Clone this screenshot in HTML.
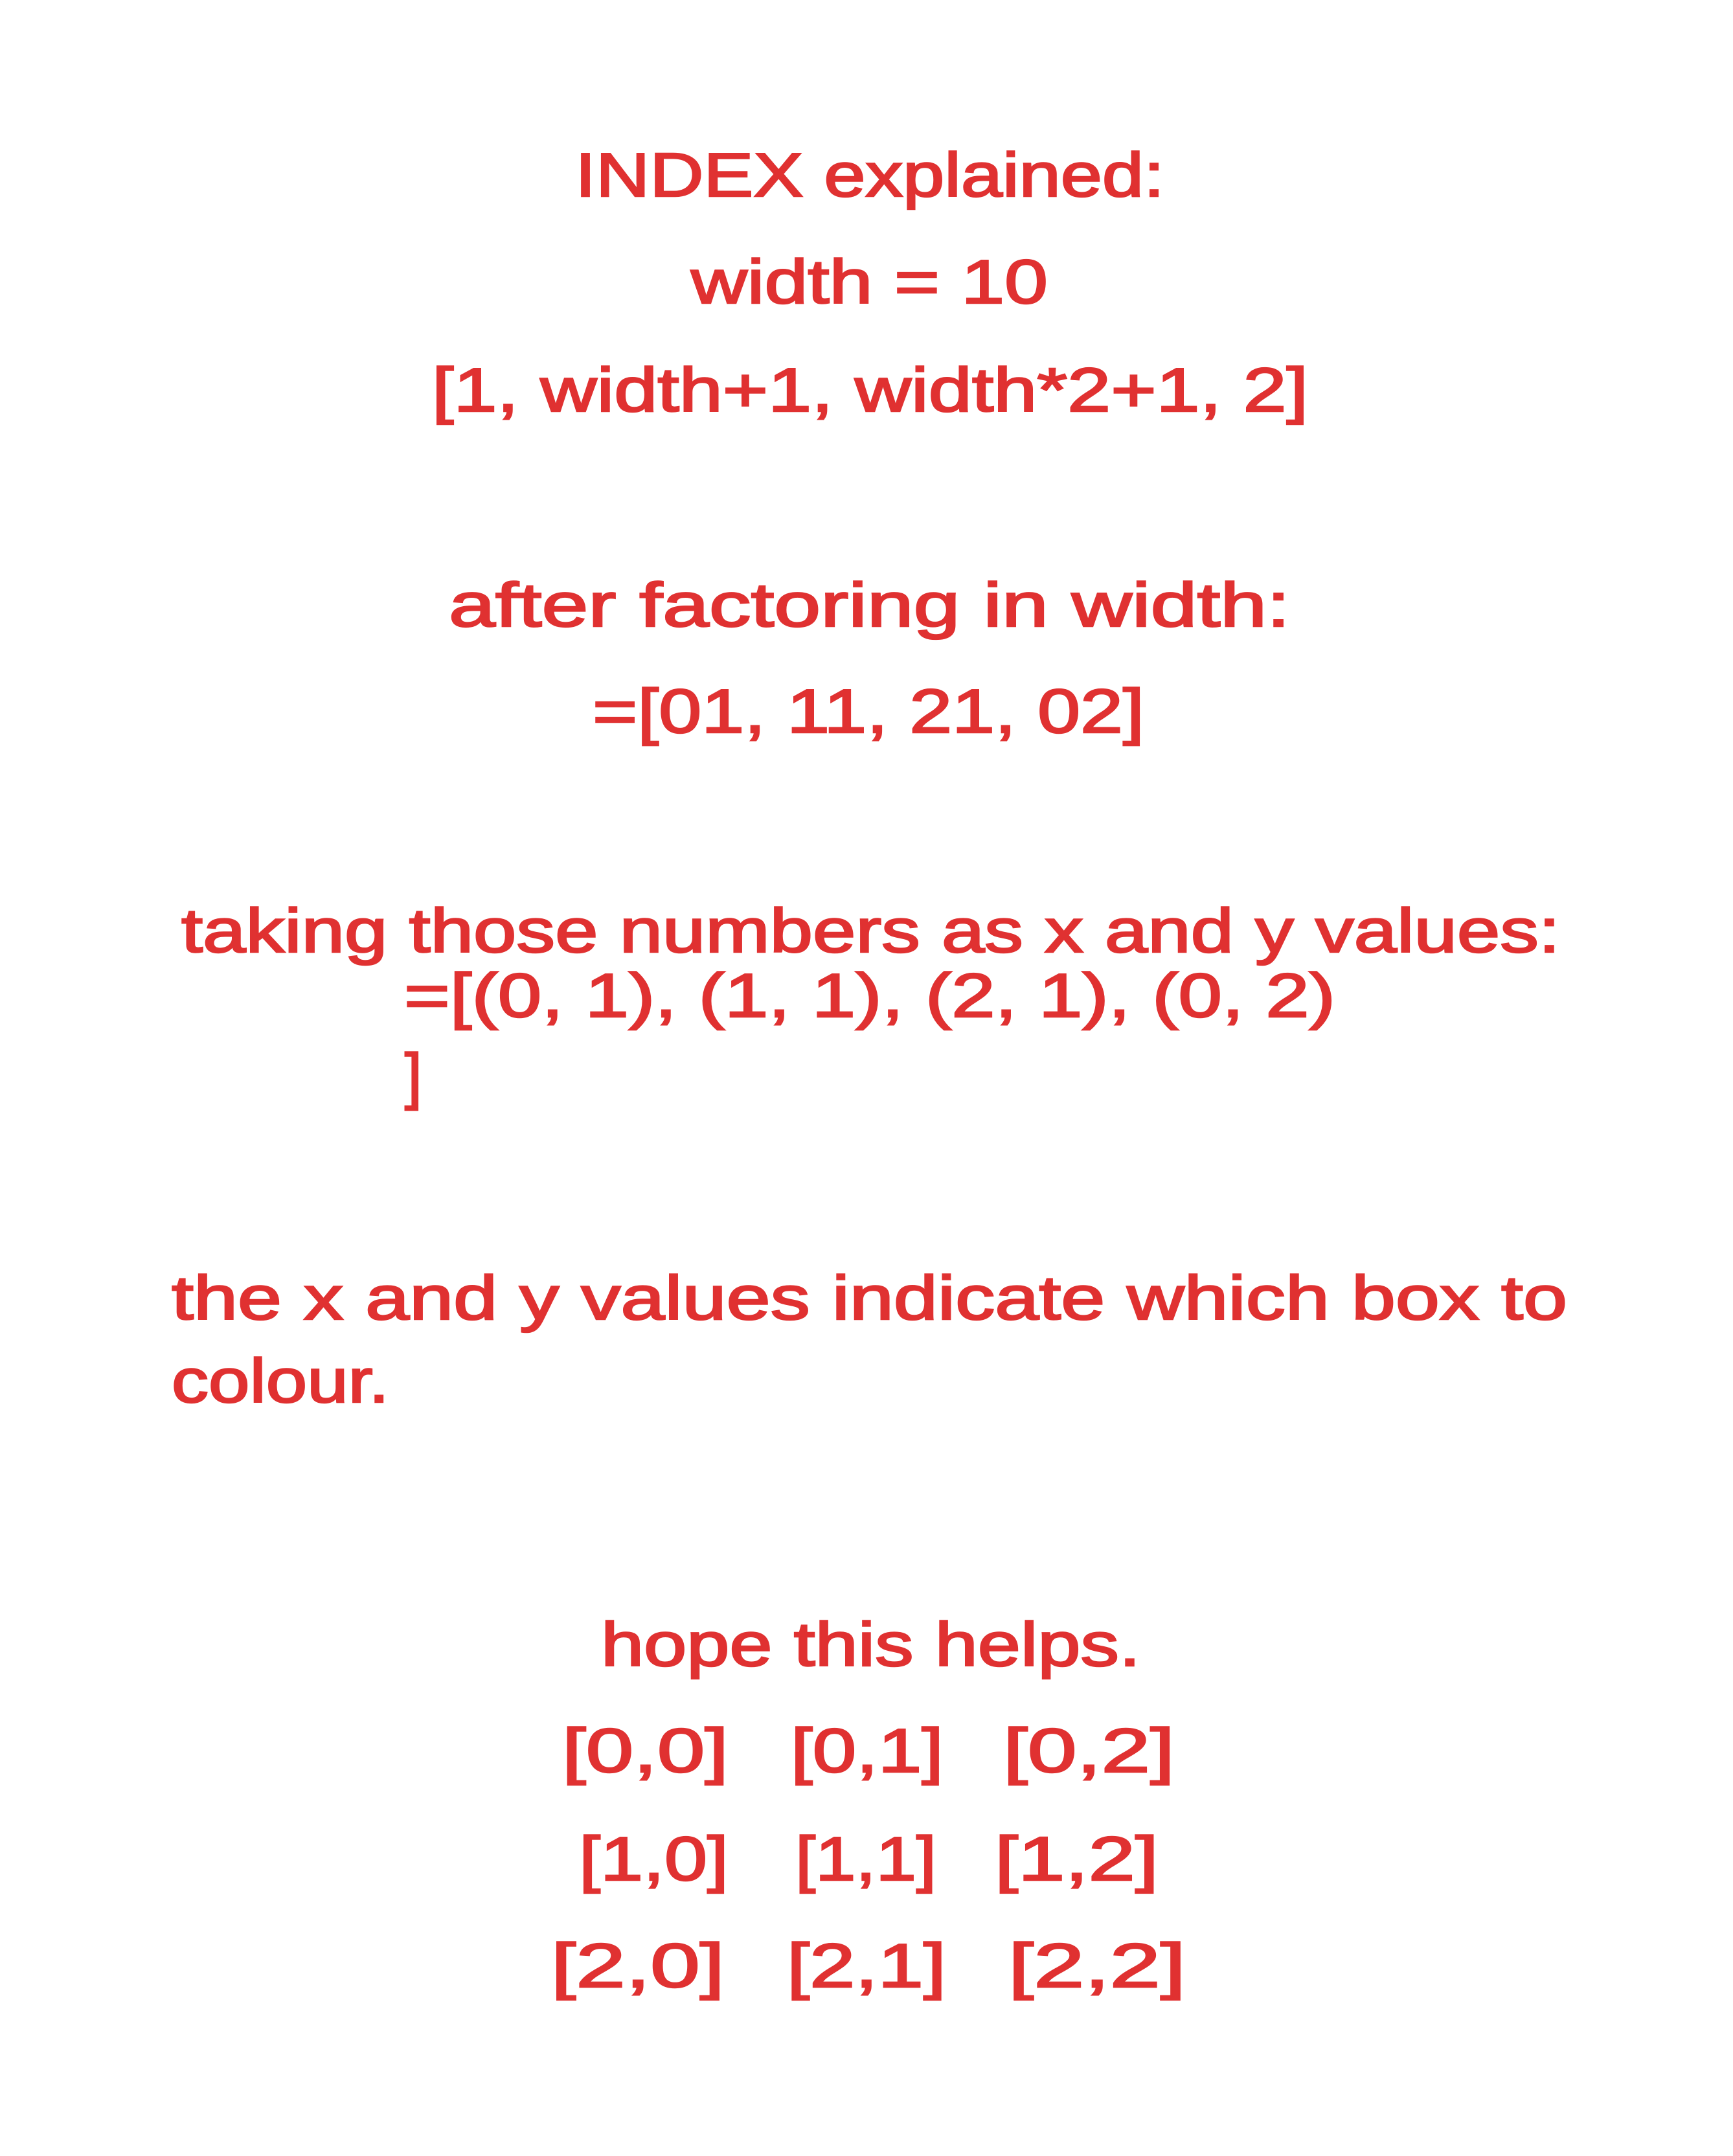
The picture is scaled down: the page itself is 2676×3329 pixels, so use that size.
<!DOCTYPE html>
<html><head><meta charset="utf-8"><style>
html,body{margin:0;padding:0;background:#fff;}
svg{display:block;}
text{font-family:"Liberation Sans",sans-serif;font-size:96px;fill:#e03131;stroke:#e03131;stroke-width:2.5;}
</style></head><body>
<svg width="2676" height="3329" viewBox="0 0 2676 3329" xmlns="http://www.w3.org/2000/svg">
<rect width="2676" height="3329" fill="#fff" stroke="none"/>
<g transform="translate(-9,9)">
<text x="897" y="294" textLength="910" lengthAdjust="spacingAndGlyphs">INDEX explained:</text>
<text x="1076" y="459" textLength="551" lengthAdjust="spacingAndGlyphs">width = 10</text>
<text x="676" y="626" textLength="1353" lengthAdjust="spacingAndGlyphs">[1, width+1, width*2+1, 2]</text>
<text x="702" y="958" textLength="1299" lengthAdjust="spacingAndGlyphs">after factoring in width:</text>
<text x="924" y="1122" textLength="852" lengthAdjust="spacingAndGlyphs">=[01, 11, 21, 02]</text>
<text x="289" y="1461" textLength="2129" lengthAdjust="spacingAndGlyphs">taking those numbers as x and y values:</text>
<text x="633" y="1561" textLength="1438" lengthAdjust="spacingAndGlyphs">=[(0, 1), (1, 1), (2, 1), (0, 2)</text>
<text x="634" y="1685">]</text>
<text x="274" y="2028" textLength="2155" lengthAdjust="spacingAndGlyphs">the x and y values indicate which box to</text>
<text x="274" y="2156" textLength="336" lengthAdjust="spacingAndGlyphs">colour.</text>
<text x="937" y="2563" textLength="833" lengthAdjust="spacingAndGlyphs">hope this helps.</text>
<text x="877" y="2727" textLength="257" lengthAdjust="spacingAndGlyphs">[0,0]</text>
<text x="1230" y="2727" textLength="236" lengthAdjust="spacingAndGlyphs">[0,1]</text>
<text x="1558" y="2727" textLength="265" lengthAdjust="spacingAndGlyphs">[0,2]</text>
<text x="903" y="2894" textLength="231" lengthAdjust="spacingAndGlyphs">[1,0]</text>
<text x="1237" y="2894" textLength="218" lengthAdjust="spacingAndGlyphs">[1,1]</text>
<text x="1545" y="2894" textLength="253" lengthAdjust="spacingAndGlyphs">[1,2]</text>
<text x="860" y="3059" textLength="268" lengthAdjust="spacingAndGlyphs">[2,0]</text>
<text x="1224" y="3059" textLength="246" lengthAdjust="spacingAndGlyphs">[2,1]</text>
<text x="1566" y="3059" textLength="274" lengthAdjust="spacingAndGlyphs">[2,2]</text>
</g>
</svg>
</body></html>
